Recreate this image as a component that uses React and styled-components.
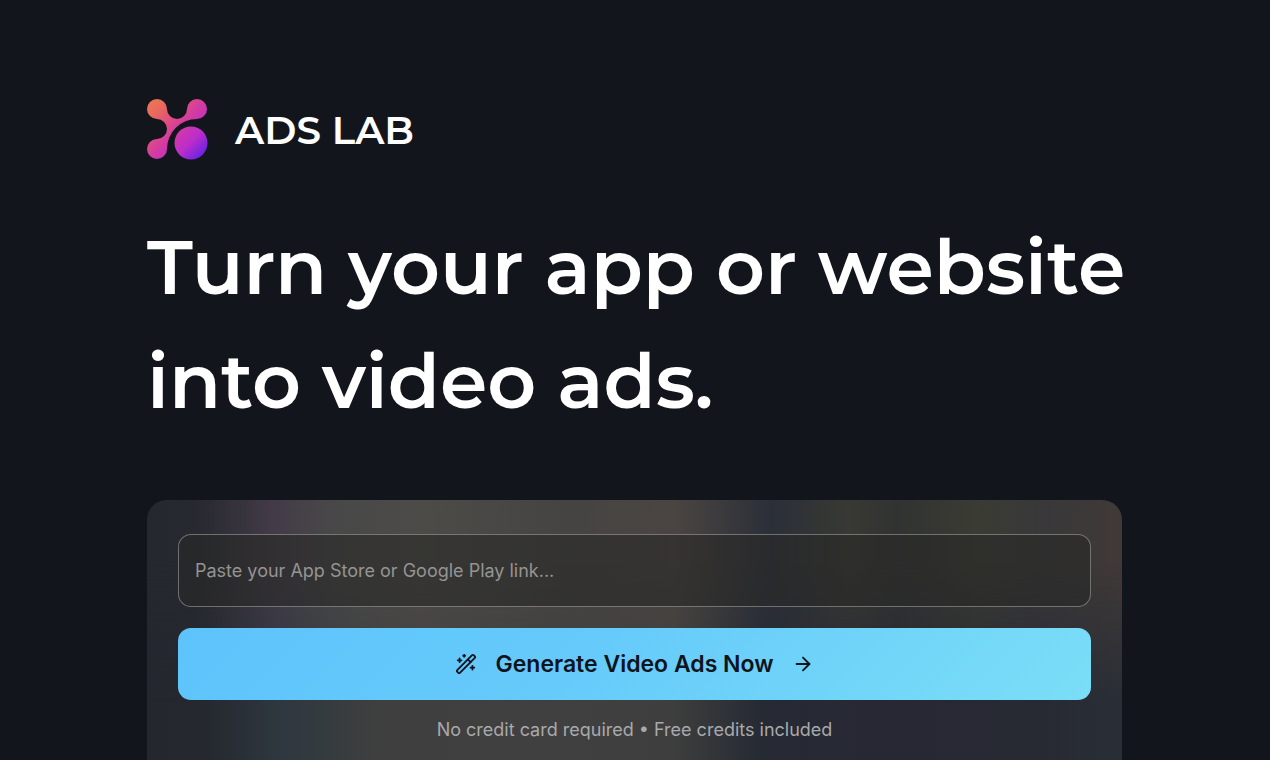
import React, { useState } from "react";
import styled, { createGlobalStyle } from "styled-components";
import { ArrowRight, WandSparkles } from "lucide-react";

function Logo() {
  return (
    <LogoMark viewBox="0 0 61 61" aria-hidden="true">
      <defs>
        <linearGradient id="brand" gradientUnits="userSpaceOnUse" x1="2" y1="2" x2="59" y2="57">
          <stop offset="0" stopColor="#ea7656" />
          <stop offset="0.16" stopColor="#e96a5c" />
          <stop offset="0.36" stopColor="#df4c84" />
          <stop offset="0.52" stopColor="#d23aa4" />
          <stop offset="0.74" stopColor="#bd2dcb" />
          <stop offset="1" stopColor="#5a22e4" />
        </linearGradient>
      </defs>
      <path
        fill="url(#brand)"
        d="M10 0A10 10 0 0 1 20 10A10 10 0 0 0 40 10A10 10 0 1 1 50 20A30 30 0 0 0 20 50A10 10 0 1 1 10 40A10 10 0 0 0 10 20A10 10 0 0 1 10 0Z"
      />
      <circle fill="url(#brand)" cx="44" cy="44" r="16.5" />
    </LogoMark>
  );
}

function App() {
  const [link, setLink] = useState("");

  const handleSubmit = (e) => {
    e.preventDefault();
  };

  return (
    <Page>
      <GlobalStyle />
      <Brand>
        <Logo />
        <BrandName>ADS LAB</BrandName>
      </Brand>
      <Title>Turn your app or website into video ads.</Title>
      <Panel onSubmit={handleSubmit}>
        <LinkInput
          type="text"
          aria-label="App link"
          placeholder="Paste your App Store or Google Play link..."
          value={link}
          onChange={(e) => setLink(e.target.value)}
        />
        <Submit type="submit">
          <WandSparkles size={22} />
          Generate Video Ads Now
          <ArrowRight size={22} />
        </Submit>
        <Note>No credit card required • Free credits included</Note>
      </Panel>
    </Page>
  );
}

export default App;

const GlobalStyle = createGlobalStyle`
  * {
    box-sizing: border-box;
  }
  body {
    margin: 0;
    background: #12151c;
  }
`;
const Page = styled.main`
  display: flex;
  flex-direction: column;
  height: 100vh;
  overflow: hidden;
  padding: 99px 148px 0 147px;
  background: #12151c;
  color: #fff;
  font-family: Inter, "Liberation Sans", sans-serif;
`;
const Brand = styled.header`
  display: flex;
  align-items: center;
  flex-shrink: 0;
  gap: 27px;
`;
const LogoMark = styled.svg`
  display: block;
  width: 61px;
  height: 61px;
`;
const BrandName = styled.span`
  font-family: Montserrat, Inter, sans-serif;
  font-size: 39px;
  line-height: 60px;
  font-weight: 600;
`;
const Title = styled.h1`
  margin: 50px -20px 62px 0;
  font-family: Montserrat, Inter, sans-serif;
  font-size: 76px;
  line-height: 114px;
  font-weight: 600;
`;
const Panel = styled.form`
  position: relative;
  isolation: isolate;
  display: flex;
  flex-direction: column;
  flex: 1 0 auto;
  gap: 21px;
  padding: 34px 31px 0;
  border-radius: 20px 20px 0 0;
  overflow: hidden;
  background: linear-gradient(
    90deg,
    #25282f 0%,
    #26292f 5%,
    #433b47 13%,
    #484849 19%,
    #4d4b48 28%,
    #454442 43%,
    #4b4542 54%,
    #2b2f38 64%,
    #383933 72%,
    #313332 77%,
    #3a3b33 85%,
    #39383a 92%,
    #403937 100%
  );
  /* lower half of the blurred backdrop fades in over the upper one */
  &::before {
    content: "";
    position: absolute;
    z-index: -1;
    inset: 0;
    background: linear-gradient(
      90deg,
      #25272f 0%,
      #25282f 6%,
      #2f3840 14%,
      #343b3e 18%,
      #403f3f 24%,
      #404040 42%,
      #3d3e3d 54%,
      #262a33 63%,
      #272833 75%,
      #272933 90%,
      #292e36 100%
    );
    mask-image: linear-gradient(transparent 25%, #000 78%);
  }
`;
const LinkInput = styled.input`
  width: 100%;
  height: 73px;
  padding: 0 16px;
  border: 1px solid rgba(255, 255, 255, 0.33);
  border-radius: 13px;
  outline: none;
  background: rgba(40, 40, 39, 0.6);
  color: #fff;
  font-family: inherit;
  font-size: 18px;
  &::placeholder {
    color: #949492;
    opacity: 1;
  }
`;
const Submit = styled.button`
  display: flex;
  align-items: center;
  justify-content: center;
  gap: 18px;
  width: 100%;
  height: 72px;
  border: 0;
  border-radius: 13px;
  background: linear-gradient(135deg, #5ec3fb 0%, #66cbfa 45%, #7bdef7 100%);
  color: #10141c;
  font-family: inherit;
  font-size: 23px;
  font-weight: 600;
`;
const Note = styled.p`
  margin: 0;
  color: #a9a9ab;
  text-align: center;
  font-size: 18px;
  line-height: 18px;
`;
